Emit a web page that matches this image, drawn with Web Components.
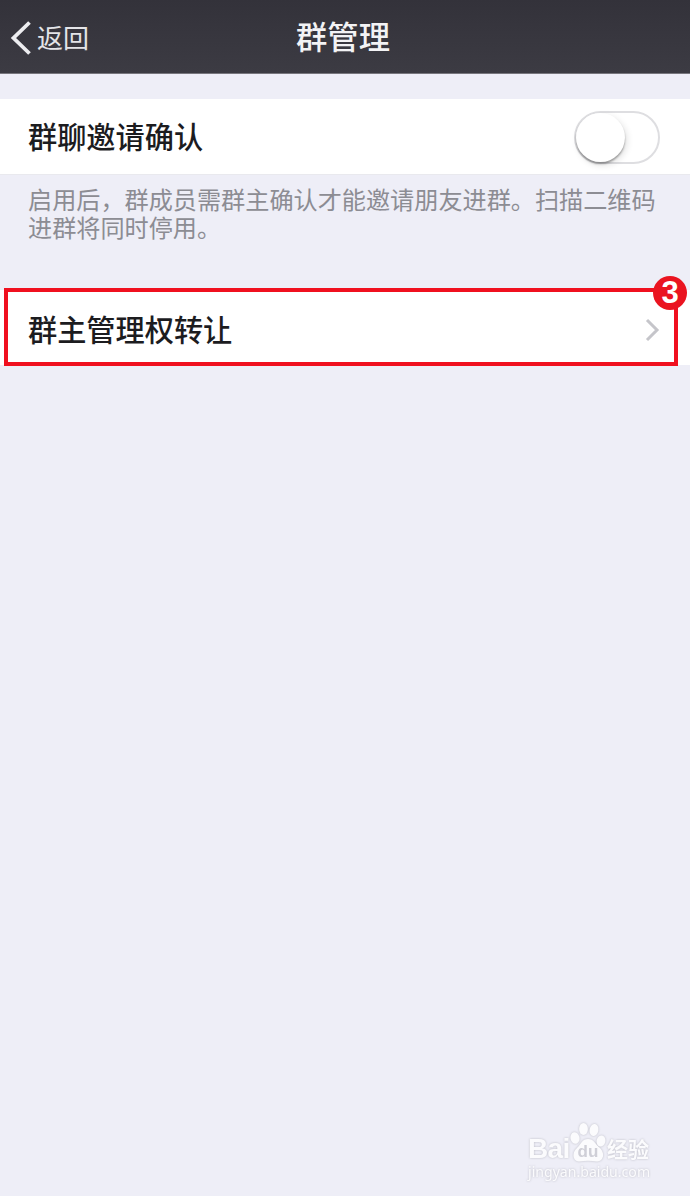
<!DOCTYPE html>
<html lang="zh-CN">
<head>
<meta charset="utf-8">
<title>群管理</title>
<style>
html,body{margin:0;height:100%}
body{font-family:"Noto Sans CJK SC","Noto Sans",sans-serif;background:#eeeef7;overflow:hidden}
</style>
</head>
<body>
<group-page></group-page>
<script>
const define = (name, html) => customElements.define(name, class extends HTMLElement {
  constructor() {
    super();
    const t = document.createElement('template');
    t.innerHTML = html;
    this.attachShadow({mode: 'open'}).append(t.content.cloneNode(true));
  }
});

define('nav-bar', `<style>
:host{display:grid;grid-template-columns:1fr auto 1fr;align-items:center;height:74px;box-sizing:border-box;padding:0 4px 0 0;background:linear-gradient(#33323a,#3c3b43);border-bottom:1px solid #77767d;color:#f3f3f5}
.back{display:flex;align-items:center;font-size:26px;line-height:36px;color:#e4e4e8}
svg{width:37px;height:40px;flex:none}
.title{font-size:31.3px;line-height:42px;font-weight:500;padding-bottom:2px}
</style>
<div class="back"><svg viewBox="0 0 37 40"><path d="M29.5 5.5 13.5 21 29.5 36.5" fill="none" stroke="#ededf0" stroke-width="3.8"/></svg><slot name="back"></slot></div>
<div class="title"><slot></slot></div>`);

define('setting-row', `<style>
:host{display:flex;align-items:center;justify-content:space-between;height:75px;box-sizing:border-box;padding:0 30px 0 28px;background:#fff;color:#1c1c1f;font-size:29.2px;line-height:42px;font-weight:500}
span{padding-bottom:var(--label-lift,0)}
</style><span><slot></slot></span><slot name="end"></slot>`);

define('toggle-switch', `<style>
:host{display:block;width:86px;height:53px;box-sizing:border-box;border:2px solid #dedee1;border-radius:27px;background:#fff;margin-top:2px}
i{display:block;width:49px;height:49px;border-radius:50%;background:#fff;box-shadow:0 2px 2px rgba(0,0,0,.32),2px 3px 7px rgba(0,0,0,.12)}
</style><i></i>`);

define('chevron-right', `<style>:host{display:block;width:16px;height:26px;padding-top:4px}svg{display:block}</style>
<svg width="16" height="26" viewBox="0 0 16 26"><path d="M3 3 13 13 3 23" fill="none" stroke="#c5c5ca" stroke-width="3"/></svg>`);

define('setting-note', `<style>
:host{display:block;box-sizing:border-box;padding:10px 20px 0 28px;height:116px;font-size:24.15px;line-height:28px;color:#8c8c93;border-top:1px solid #e9e9ee}
</style><slot></slot>`);

define('step-highlight', `<style>
:host{display:block;position:relative}
.frame{position:absolute;left:4px;top:-2px;width:674px;height:78px;box-sizing:border-box;border:4px solid #f0101f}
.badge{position:absolute;left:653px;top:-14px;width:34px;height:34px;border-radius:50%;background:#ea1420;color:#fff;font:bold 31px/34px "Liberation Sans",sans-serif;text-align:center}
</style><slot></slot><div class="frame"></div><div class="badge"><slot name="step"></slot></div>`);

define('site-mark', `<style>
:host{display:flex;flex-direction:column;width:124px;color:#fbfbfd;filter:drop-shadow(0 0 1px #bcbcc5)}
.logo{display:flex;align-items:flex-end;height:42px}
.bai{width:42px;font:bold 28px/30px "Liberation Sans",sans-serif;letter-spacing:-.6px;height:28px}
svg{width:37px;height:40px;flex:none}
.cn{font-size:21px;line-height:24px;font-weight:700;height:26px}
.url{font:14.1px/20px "Noto Sans",sans-serif;white-space:nowrap}
</style>
<div class="logo"><span class="bai">Bai</span>
<svg viewBox="0 0 37 40"><g fill="#fbfbfd"><ellipse cx="5" cy="16" rx="4.5" ry="5.8" transform="rotate(-12 5 16)"/><ellipse cx="13.5" cy="7" rx="4.4" ry="6"/><ellipse cx="24" cy="8" rx="4.4" ry="6" transform="rotate(10 24 8)"/><ellipse cx="31" cy="19" rx="4.4" ry="5.6" transform="rotate(12 31 19)"/><path d="M18 17C12 17 11 22 7 26C2 30 2 39 9 39.5Q18 38 27 39.5C34 39 35 31 30 26C25 22 24 17 18 17Z"/></g><text x="18" y="35" text-anchor="middle" font-family="Liberation Sans" font-weight="bold" font-size="17" fill="#cfcfd7">du</text></svg>
<span class="cn">经验</span></div><div class="url">jingyan.baidu.com</div>`);

define('group-page', `<style>
:host{display:flex;flex-direction:column;width:690px;height:1196px;background:#eeeef7}
.first{margin-top:25px;--label-lift:3px}
site-mark{margin:auto 38px 14px auto}
</style>
<nav-bar><span slot="back">返回</span>群管理</nav-bar>
<setting-row class="first">群聊邀请确认<toggle-switch slot="end"></toggle-switch></setting-row>
<setting-note>启用后，群成员需群主确认才能邀请朋友进群。扫描二维码进群将同时停用。</setting-note>
<step-highlight><setting-row>群主管理权转让<chevron-right slot="end"></chevron-right></setting-row><span slot="step">3</span></step-highlight>
<site-mark></site-mark>`);
</script>
</body>
</html>
